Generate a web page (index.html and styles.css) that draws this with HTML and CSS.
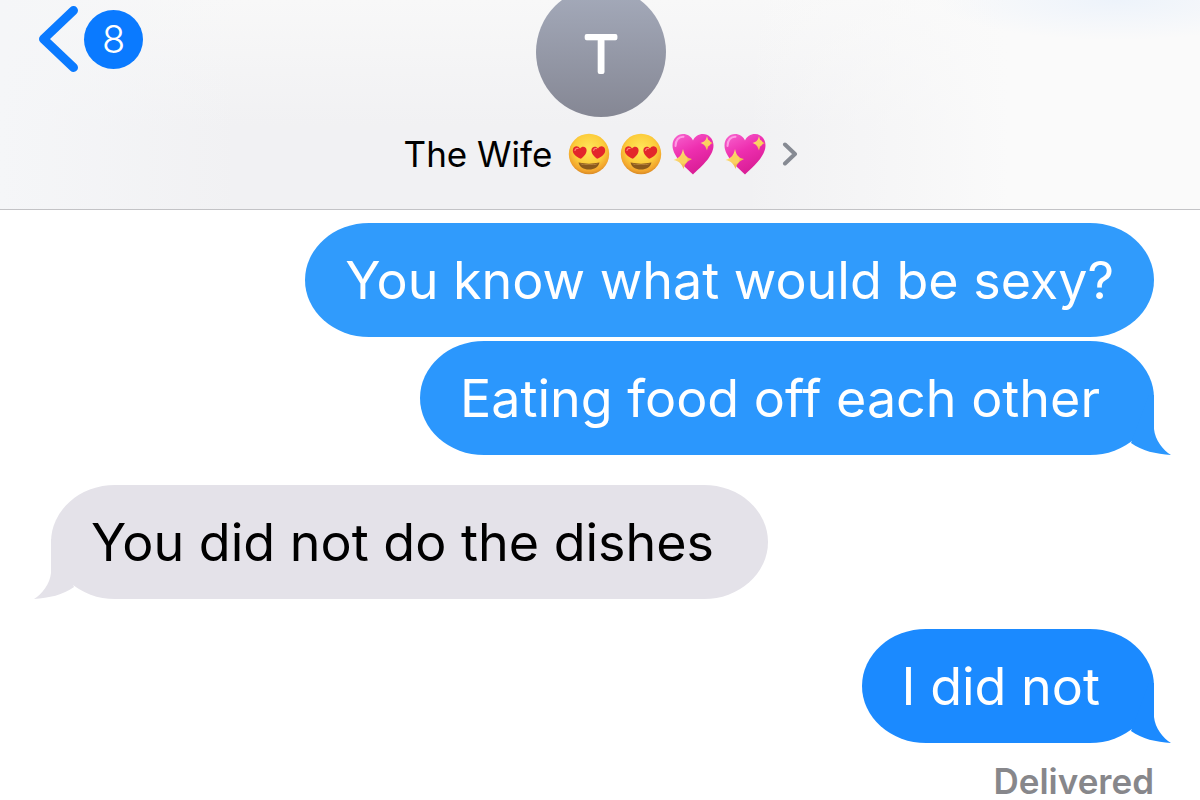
FILE: index.html
```html
<!DOCTYPE html>
<html lang="en">
<head>
<meta charset="utf-8">
<meta name="viewport" content="width=device-width, initial-scale=1">
<title>Messages</title>
<link rel="stylesheet" href="styles.css">
</head>
<body>
<svg class="defs" aria-hidden="true">
  <defs>
    <radialGradient id="face" cx="50%" cy="38%" r="62%">
      <stop offset="0" stop-color="#ffe65a"/>
      <stop offset="0.6" stop-color="#fccd3c"/>
      <stop offset="0.88" stop-color="#f2a42c"/>
      <stop offset="1" stop-color="#d98a25"/>
    </radialGradient>
    <linearGradient id="pink" x1="0" y1="0" x2="0.5" y2="1">
      <stop offset="0" stop-color="#f765cf"/>
      <stop offset="0.5" stop-color="#ee2fb0"/>
      <stop offset="1" stop-color="#d91d95"/>
    </linearGradient>
    <linearGradient id="gold" x1="0" y1="0" x2="1" y2="1">
      <stop offset="0" stop-color="#fff08a"/>
      <stop offset="1" stop-color="#f0a83a"/>
    </linearGradient>
    <symbol id="heart-eyes" viewBox="0 0 42 42">
      <circle cx="21" cy="21" r="20.200" fill="url(#face)"/>
      <path d="M10.500 29.500C17 31 25 31 31.500 29.500C30.500 34 26.500 36.500 21 36.500S11.500 34 10.500 29.500Z" fill="#8a5a1c"/>
      <path d="M12 30.500C18 31.800 24 31.800 30 30.500C28.500 32.500 13.500 32.500 12 30.500Z" fill="#c9924a"/>
      <path d="M12.800 25.800C8 23.800 3.800 20.500 5 16C6 12.600 10.200 12.400 12 15.500C14.200 12.400 18.600 13.600 18.600 17.200C18.600 21 15.800 23.500 12.800 25.800Z" fill="#e3262b"/>
      <path d="M29.200 25.800C34 23.800 38.200 20.500 37 16C36 12.600 31.800 12.400 30 15.500C27.800 12.400 23.400 13.600 23.400 17.200C23.400 21 26.200 23.500 29.200 25.800Z" fill="#e3262b"/>
      <path d="M7 17.500C7.200 15.800 8.500 15 10 15.500M25.700 17.500C26 15.900 27 15.200 28.500 15.600" fill="none" stroke="#ff8479" stroke-width="1.200" stroke-linecap="round"/>
    </symbol>
    <symbol id="spark-heart" viewBox="0 0 42 42">
      <path d="M21 41.500C15 35.500 0.500 24 0.500 12.500C0.500 5.500 5.500 1 11 1C15.500 1 19.300 3.500 21 7.500C22.700 3.500 26.500 1 31 1C36.500 1 41.500 5.500 41.500 12.500C41.500 24 27 35.500 21 41.500Z" fill="url(#pink)"/>
      <path d="M3.500 13C3.500 7 7 3.500 11.500 3.800" fill="none" stroke="#ff9be4" stroke-width="2" stroke-linecap="round"/>
      <path d="M11 16C12.500 22.500 14.500 25 20 26C15 28.500 13 30.500 11.500 36C9.500 30.500 7.500 28.500 1.500 27C7.500 25 9.500 22.500 11 16Z" fill="url(#gold)"/>
      <path d="M35 3C36 7.500 37 9 41 10C37 11.500 36 13 35 17.500C33.500 13 32.500 11.500 28.500 10C32.500 9 34 7.500 35 3Z" fill="url(#gold)"/>
      <circle cx="35.500" cy="10" r="3" fill="#fbd160"/>
      <circle cx="11.200" cy="26.500" r="4.200" fill="#fbd160"/>
    </symbol>
    <symbol id="tail" viewBox="0 0 42 60">
      <path d="M20 0H25V34C26 45 34 55 42 60C27 59 13 56 2 48Z" fill="currentColor"/>
    </symbol>
  </defs>
</svg>

<header class="bar">
  <button class="back" type="button" aria-label="Back, 8 unread">
    <svg class="back-arrow" viewBox="0 0 40 68" aria-hidden="true"><path d="M34.500 5.500L4.500 34L34.500 62.500"/></svg>
    <span class="count">8</span>
  </button>
  <div class="contact">
    <svg class="avatar" viewBox="0 0 130 130" role="img" aria-label="T">
      <defs>
        <linearGradient id="disc" x1="0" y1="0" x2="0" y2="1">
          <stop offset="0" stop-color="#a5abbb"/>
          <stop offset="1" stop-color="#858794"/>
        </linearGradient>
      </defs>
      <circle cx="65" cy="65" r="65" fill="url(#disc)"/>
      <text class="initial" x="65" y="85">T</text>
    </svg>
    <button class="name" type="button">
      <span>The Wife</span>
      <span class="emojis">
        <svg class="emoji" role="img" aria-label="heart eyes"><use href="#heart-eyes"/></svg>
        <svg class="emoji" role="img" aria-label="heart eyes"><use href="#heart-eyes"/></svg>
        <svg class="emoji" role="img" aria-label="sparkling heart"><use href="#spark-heart"/></svg>
        <svg class="emoji" role="img" aria-label="sparkling heart"><use href="#spark-heart"/></svg>
      </span>
      <svg class="chevron" viewBox="0 0 16 24" aria-hidden="true"><path d="M3 2.500L13 12L3 21.500"/></svg>
    </button>
  </div>
</header>

<main class="thread">
  <p class="bubble sent first">You know what would be sexy?</p>
  <p class="bubble sent second">Eating food off each other<svg class="tail" aria-hidden="true"><use href="#tail"/></svg></p>
  <p class="bubble received">You did not do the dishes<svg class="tail" aria-hidden="true"><use href="#tail"/></svg></p>
  <p class="bubble sent last">I did not<svg class="tail" aria-hidden="true"><use href="#tail"/></svg></p>
  <p class="status">Delivered</p>
</main>
</body>
</html>
```
FILE: styles.css
```css
* {
  box-sizing: border-box;
}

body {
  margin: 0;
  background: #fff;
  color: #000;
  font-family: Inter, "Liberation Sans", sans-serif;
}

button {
  border: 0;
  padding: 0;
  background: none;
  color: inherit;
  font: inherit;
  cursor: pointer;
}

p {
  margin: 0;
}

.defs {
  position: absolute;
  width: 0;
  height: 0;
}

.bar {
  display: grid;
  grid-template-columns: 1fr auto 1fr;
  align-items: start;
  height: 210px;
  overflow: hidden;
  border-bottom: 1px solid #c3c3c6;
  background:
    radial-gradient(ellipse 180px 40px at 93% 0, #edf3fb, transparent),
    linear-gradient(90deg, #f5f6f8 0, transparent 20%, transparent 62%, #fafafa 84%),
    linear-gradient(#f8f8f8, #f1f1f3 60%, #f1f1f3);
}

.back {
  display: flex;
  align-items: center;
  gap: 5px;
  margin: 5px 0 0 39px;
}

.back-arrow {
  width: 40px;
  height: 68px;
  fill: none;
  stroke: #0a7aff;
  stroke-width: 9;
  stroke-linecap: round;
  stroke-linejoin: round;
}

.count {
  width: 59px;
  border-radius: 50%;
  background: #0a7aff;
  color: #fff;
  font-size: 38px;
  font-weight: 300;
  line-height: 59px;
  text-align: center;
}

.contact {
  display: flex;
  flex-direction: column;
  align-items: center;
  gap: 12px;
  padding-left: 2px;
}

.avatar {
  width: 130px;
  height: 130px;
  margin-top: -13px;
}

.initial {
  fill: #fff;
  stroke: #fff;
  stroke-width: 4px;
  stroke-linejoin: round;
  font-family: Lato, sans-serif;
  font-size: 52px;
  font-weight: 300;
  text-anchor: middle;
}

.name {
  display: flex;
  align-items: center;
  gap: 16px;
  font-size: 35px;
  line-height: 50px;
}

.emojis {
  display: flex;
  gap: 10px;
}

.emoji {
  width: 42px;
  height: 42px;
}

.chevron {
  width: 16px;
  height: 24px;
  fill: none;
  stroke: #868a93;
  stroke-width: 4;
  stroke-linecap: round;
  stroke-linejoin: round;
}

.thread {
  display: flex;
  flex-direction: column;
  align-items: flex-start;
  gap: 30px;
  padding: 13px 46px 0 51px;
}

.bubble {
  position: relative;
  padding: 1px 40px 0;
  border-radius: 64px / 57px;
  font-size: 52px;
  line-height: 113px;
}

.sent {
  align-self: flex-end;
  color: #fff;
}

.first {
  margin-bottom: -26px;
  background: #309bfc;
}

.second {
  padding-right: 54px;
  background: #2b97fd;
}

.received {
  padding-right: 54px;
  background: #e4e2e9;
}

.last {
  padding-right: 54px;
  background: #1b8aff;
}

.tail {
  position: absolute;
  right: -17px;
  bottom: 0;
  width: 42px;
  height: 60px;
}

.second .tail {
  color: #2b97fd;
}

.last .tail {
  color: #1b8aff;
}

.received .tail {
  right: auto;
  left: -17px;
  color: #e4e2e9;
  transform: scaleX(-1);
}

.status {
  align-self: flex-end;
  margin-top: -10px;
  color: #87878b;
  font-size: 35px;
  font-weight: 600;
  line-height: 36px;
}
```
